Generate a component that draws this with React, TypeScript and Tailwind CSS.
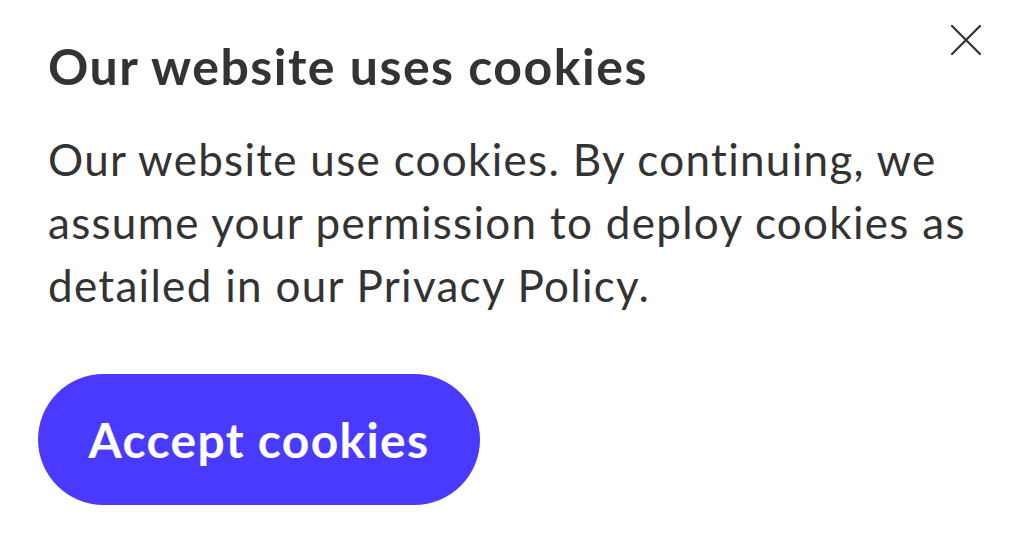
import React from "react";

export default function App() {
  return (
    <div className="w-[1024px] h-[539px] bg-white relative overflow-hidden" style={{ fontFamily: 'Lato, "Noto Sans", sans-serif' }}>
      <button aria-label="Close" className="absolute right-[42px] top-[24px] w-[32px] h-[32px] flex items-center justify-center">
        <svg width="32" height="32" viewBox="0 0 32 32" fill="none" stroke="#333" strokeWidth="2.2" strokeLinecap="round">
          <path d="M2 2 L30 30 M30 2 L2 30" />
        </svg>
      </button>
      <div className="pl-[48px] pr-[36px] pt-[34px] flex flex-col">
        <h1 className="text-[50px] leading-[64px] font-bold text-[#333] tracking-[1.5px]">Our website uses cookies</h1>
        <p className="mt-[30px] text-[44px] leading-[63px] text-[#333] tracking-[1.3px]">
          Our website use cookies. By continuing, we assume your permission to deploy cookies as detailed in our Privacy Policy.
        </p>
        <div className="mt-[57px]">
          <button className="ml-[-10px] w-[442px] h-[131px] rounded-full bg-[#4a3aff] text-white text-[48px] font-bold tracking-[1.3px] flex items-center justify-center">
            Accept cookies
          </button>
        </div>
      </div>
    </div>
  );
}
